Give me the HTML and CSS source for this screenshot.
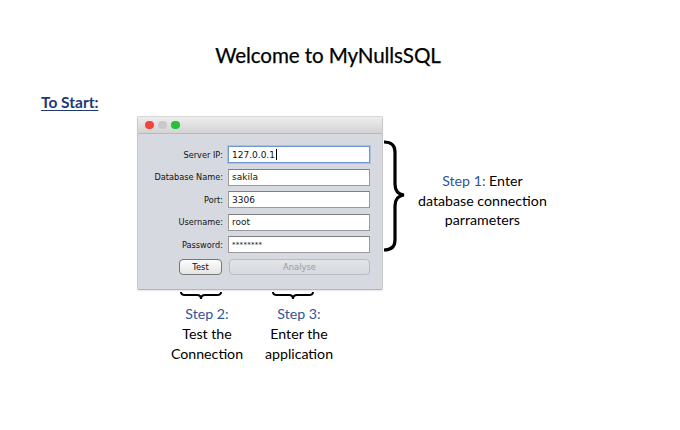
FILE: index.html
```html
<!DOCTYPE html>
<html>
<head>
<meta charset="utf-8">
<link rel="stylesheet" href="styles.css">
</head>
<body>
<div class="page">
  <h1 class="title">Welcome to MyNullsSQL</h1>
  <div class="start"><span>To Start:</span></div>
  <div class="main">
    <div class="left">
      <div class="window">
        <div class="titlebar">
          <span class="dot red"></span><span class="dot gray"></span><span class="dot green"></span>
        </div>
        <div class="wbody">
          <div class="row"><label>Server IP:</label><div class="field focus">127.0.0.1<span class="caret"></span></div></div>
          <div class="row"><label>Database Name:</label><div class="field">sakila</div></div>
          <div class="row"><label>Port:</label><div class="field">3306</div></div>
          <div class="row"><label>Username:</label><div class="field">root</div></div>
          <div class="row"><label>Password:</label><div class="field pw">********</div></div>
          <div class="row buttons">
            <div class="btncell"><button class="btn">Test</button></div>
            <button class="btn disabled">Analyse</button>
          </div>
        </div>
      </div>
      <div class="steps">
        <div class="step">
          <svg class="hbrace" width="44" height="10" viewBox="0 0 44 10"><path d="M2 1 Q2 4 6 4 L18 4 Q22 4 22 8 Q22 4 26 4 L38 4 Q42 4 42 1" fill="none" stroke="#000" stroke-width="2"/></svg>
          <div class="stext"><span class="blue">Step 2:</span><br>Test the<br>Connection</div>
        </div>
        <div class="step">
          <svg class="hbrace" width="44" height="10" viewBox="0 0 44 10"><path d="M2 1 Q2 4 6 4 L18 4 Q22 4 22 8 Q22 4 26 4 L38 4 Q42 4 42 1" fill="none" stroke="#000" stroke-width="2"/></svg>
          <div class="stext"><span class="blue">Step 3:</span><br>Enter the<br>application</div>
        </div>
      </div>
    </div>
    <svg class="vbrace" width="24" height="112" viewBox="0 0 24 112"><path d="M1 2 Q12 2 12 12 L12 44 Q12 54 21 55 Q12 56 12 66 L12 100 Q12 110 1 110" fill="none" stroke="#000" stroke-width="3.2"/></svg>
    <div class="step1"><span class="blue">Step 1:</span> Enter<br>database connection<br>parrameters</div>
  </div>
</div>
</body>
</html>
```
FILE: styles.css
```css
html, body { margin: 0; padding: 0; background: #fff; }
.page { width: 680px; height: 430px; position: relative; font-family: Lato, "Open Sans", sans-serif; color: #000; overflow: hidden; }
.title { margin: 0; padding-top: 41px; padding-right: 24px; text-align: center; font-size: 20.6px; font-weight: 400; line-height: 28px; letter-spacing: -0.1px; -webkit-text-stroke: 0.25px #000; }
.start { padding-left: 41px; margin-top: 23px; height: 22px; }
.start span { color: #1f3a73; font-weight: 700; font-size: 15.5px; text-decoration: underline; text-underline-offset: 2px; }
.main { display: flex; align-items: flex-start; margin-top: 3px; }
.left { margin-left: 138px; width: 244px; }
.window { width: 244px; height: 172px; background: #d6d9e0; box-shadow: 0 1px 2px rgba(0,0,0,0.25), 0 0 0 0.5px #b8b8b8; }
.titlebar { height: 16px; background: linear-gradient(#ededed, #d3d3d3); border-bottom: 1px solid #b9b9b9; display: flex; align-items: center; padding-left: 7px; gap: 4.5px; }
.dot { width: 8.5px; height: 8.5px; border-radius: 50%; display: inline-block; }
.red { background: #f2433c; }
.gray { background: #c9c9c9; }
.green { background: #27c038; }
.wbody { padding-top: 12px; font-family: "DejaVu Sans", sans-serif; font-size: 8.2px; }
.row { display: flex; align-items: center; height: 17px; margin-bottom: 5.5px; }
.row label { width: 90px; text-align: right; padding-right: 5px; box-sizing: border-box; color: #111; }
.field { width: 142px; height: 17px; box-sizing: border-box; background: #fff; border: 1px solid #9a9a9a; border-top-color: #7e7e7e; padding-left: 3px; display: flex; align-items: center; font-size: 9px; color: #111; }
.field.focus { border: 1px solid #6f98cf; box-shadow: 0 0 0 1px #a9c3e6; }
.caret { display: inline-block; width: 1px; height: 11px; background: #000; margin-left: 1px; }
.field.pw { font-size: 7px; letter-spacing: 0.3px; }
.buttons { margin-top: 1.5px; height: 17px; }
.btncell { width: 90px; display: flex; justify-content: flex-end; padding-right: 6px; box-sizing: border-box; }
.btn { font-family: "DejaVu Sans", sans-serif; font-size: 8.4px; height: 16px; padding: 0; border-radius: 4px; border: 1px solid #777; background: linear-gradient(#fdfdfd, #e4e4e4); color: #111; width: 43px; }
.btn.disabled { width: 141px; border-color: #b8bcc3; background: linear-gradient(#e2e4e8, #d6d9de); color: #9a9ca0; margin-left: 1px; }
.steps { display: flex; margin-top: 2px; margin-left: 29px; gap: 12px; }
.step { display: flex; flex-direction: column; align-items: center; width: 80px; }
.hbrace { margin-right: 12px; }
.stext { text-align: center; font-size: 14.2px; line-height: 20px; margin-top: 3px; white-space: nowrap; }
.blue { color: #2f5597; }
.vbrace { margin-left: 1px; margin-top: 23px; }
.step1 { margin-left: 11px; margin-top: 54px; text-align: center; font-size: 14.2px; line-height: 19.5px; white-space: nowrap; }
```
